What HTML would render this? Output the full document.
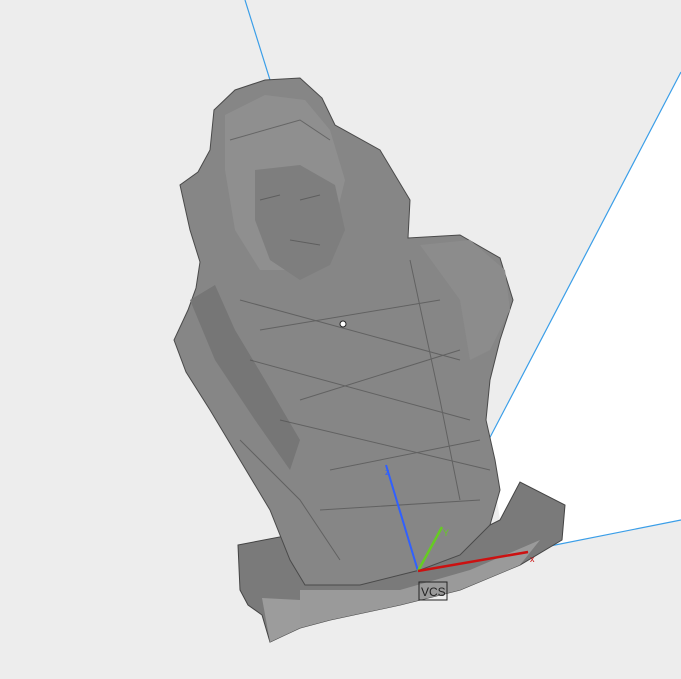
<!DOCTYPE html>
<html><head><style>
html,body{margin:0;padding:0;background:#ededed;width:681px;height:679px;overflow:hidden}
svg{display:block}
</style></head><body>
<svg width="681" height="679" viewBox="0 0 681 679" xmlns="http://www.w3.org/2000/svg">
<rect width="681" height="679" fill="#ededed"/>
<polygon points="681,72 488,440 500,520 540,548 681,520" fill="#ffffff"/>
<line x1="245" y1="0" x2="270" y2="80" stroke="#3a9ee8" stroke-width="1.2"/>
<line x1="681" y1="72" x2="486" y2="445" stroke="#3a9ee8" stroke-width="1.2"/>
<line x1="540" y1="548" x2="681" y2="520" stroke="#3a9ee8" stroke-width="1.2"/>
<path d="M238,545 L290,535 L300,548 L420,560 L500,520 L520,482 L565,505 L562,540 L520,565 L460,590 L400,605 L330,620 L300,628 L270,642 L262,615 L248,605 L240,590 Z" fill="#7a7a7a" stroke="#444" stroke-width="1"/>
<path d="M300,590 L400,590 L470,570 L540,540 L520,565 L460,590 L400,605 L330,620 L300,628 Z" fill="#9a9a9a"/>
<path d="M262,598 L300,600 L300,628 L270,642 Z" fill="#9c9c9c"/>
<path d="M265,80 L300,78 L322,98 L335,125 L380,150 L410,200 L408,238 L460,235 L500,258 L513,300 L500,340 L490,380 L486,420 L495,460 L500,490 L490,525 L460,555 L420,570 L360,585 L305,585 L290,560 L270,510 L240,460 L210,410 L186,372 L174,340 L188,310 L196,288 L200,262 L190,230 L180,185 L198,172 L210,150 L214,110 L235,90 Z" fill="#868686" stroke="#4a4a4a" stroke-width="1"/>
<path d="M225,115 L265,95 L305,100 L330,130 L345,180 L330,240 L300,270 L260,270 L235,230 L225,170 Z" fill="#8f8f8f"/>
<path d="M255,170 L300,165 L335,185 L345,230 L330,265 L300,280 L270,260 L255,220 Z" fill="#7e7e7e"/>
<path d="M190,300 L215,285 L235,330 L265,380 L300,440 L290,470 L255,420 L215,360 Z" fill="#767676"/>
<path d="M420,245 L470,240 L505,270 L510,310 L490,350 L470,360 L460,300 Z" fill="#8c8c8c"/>
<g stroke="#4a4a4a" stroke-width="1" fill="none" opacity="0.6">
<path d="M240,300 L460,360"/><path d="M250,360 L470,420"/><path d="M280,420 L490,470"/>
<path d="M260,330 L440,300"/><path d="M300,400 L460,350"/><path d="M330,470 L480,440"/>
<path d="M320,510 L480,500"/><path d="M230,140 L300,120 L330,140"/><path d="M260,200 L280,195"/>
<path d="M300,200 L320,195"/><path d="M290,240 L320,245"/><path d="M240,440 L300,500 L340,560"/>
<path d="M410,260 L440,400 L460,500"/>
</g>
<line x1="418" y1="571" x2="386" y2="465" stroke="#3060ff" stroke-width="2"/>
<text x="385" y="475" font-family="Liberation Sans,sans-serif" font-size="9" fill="#3060ff">z</text>
<line x1="418" y1="571" x2="442" y2="527" stroke="#66cc22" stroke-width="2.5"/>
<text x="443" y="536" font-family="Liberation Sans,sans-serif" font-size="9" fill="#66cc22">Y</text>
<line x1="418" y1="571" x2="528" y2="552" stroke="#cc1111" stroke-width="2.5"/>
<text x="530" y="562" font-family="Liberation Sans,sans-serif" font-size="9" fill="#cc1111">x</text>
<rect x="419" y="582" width="28" height="18" fill="none" stroke="#222" stroke-width="1"/>
<text x="421" y="596" font-family="Liberation Sans,sans-serif" font-size="12" fill="#222">VCS</text>
<circle cx="343" cy="324" r="3" fill="#fff" stroke="#222" stroke-width="1"/>
</svg>
</body></html>
